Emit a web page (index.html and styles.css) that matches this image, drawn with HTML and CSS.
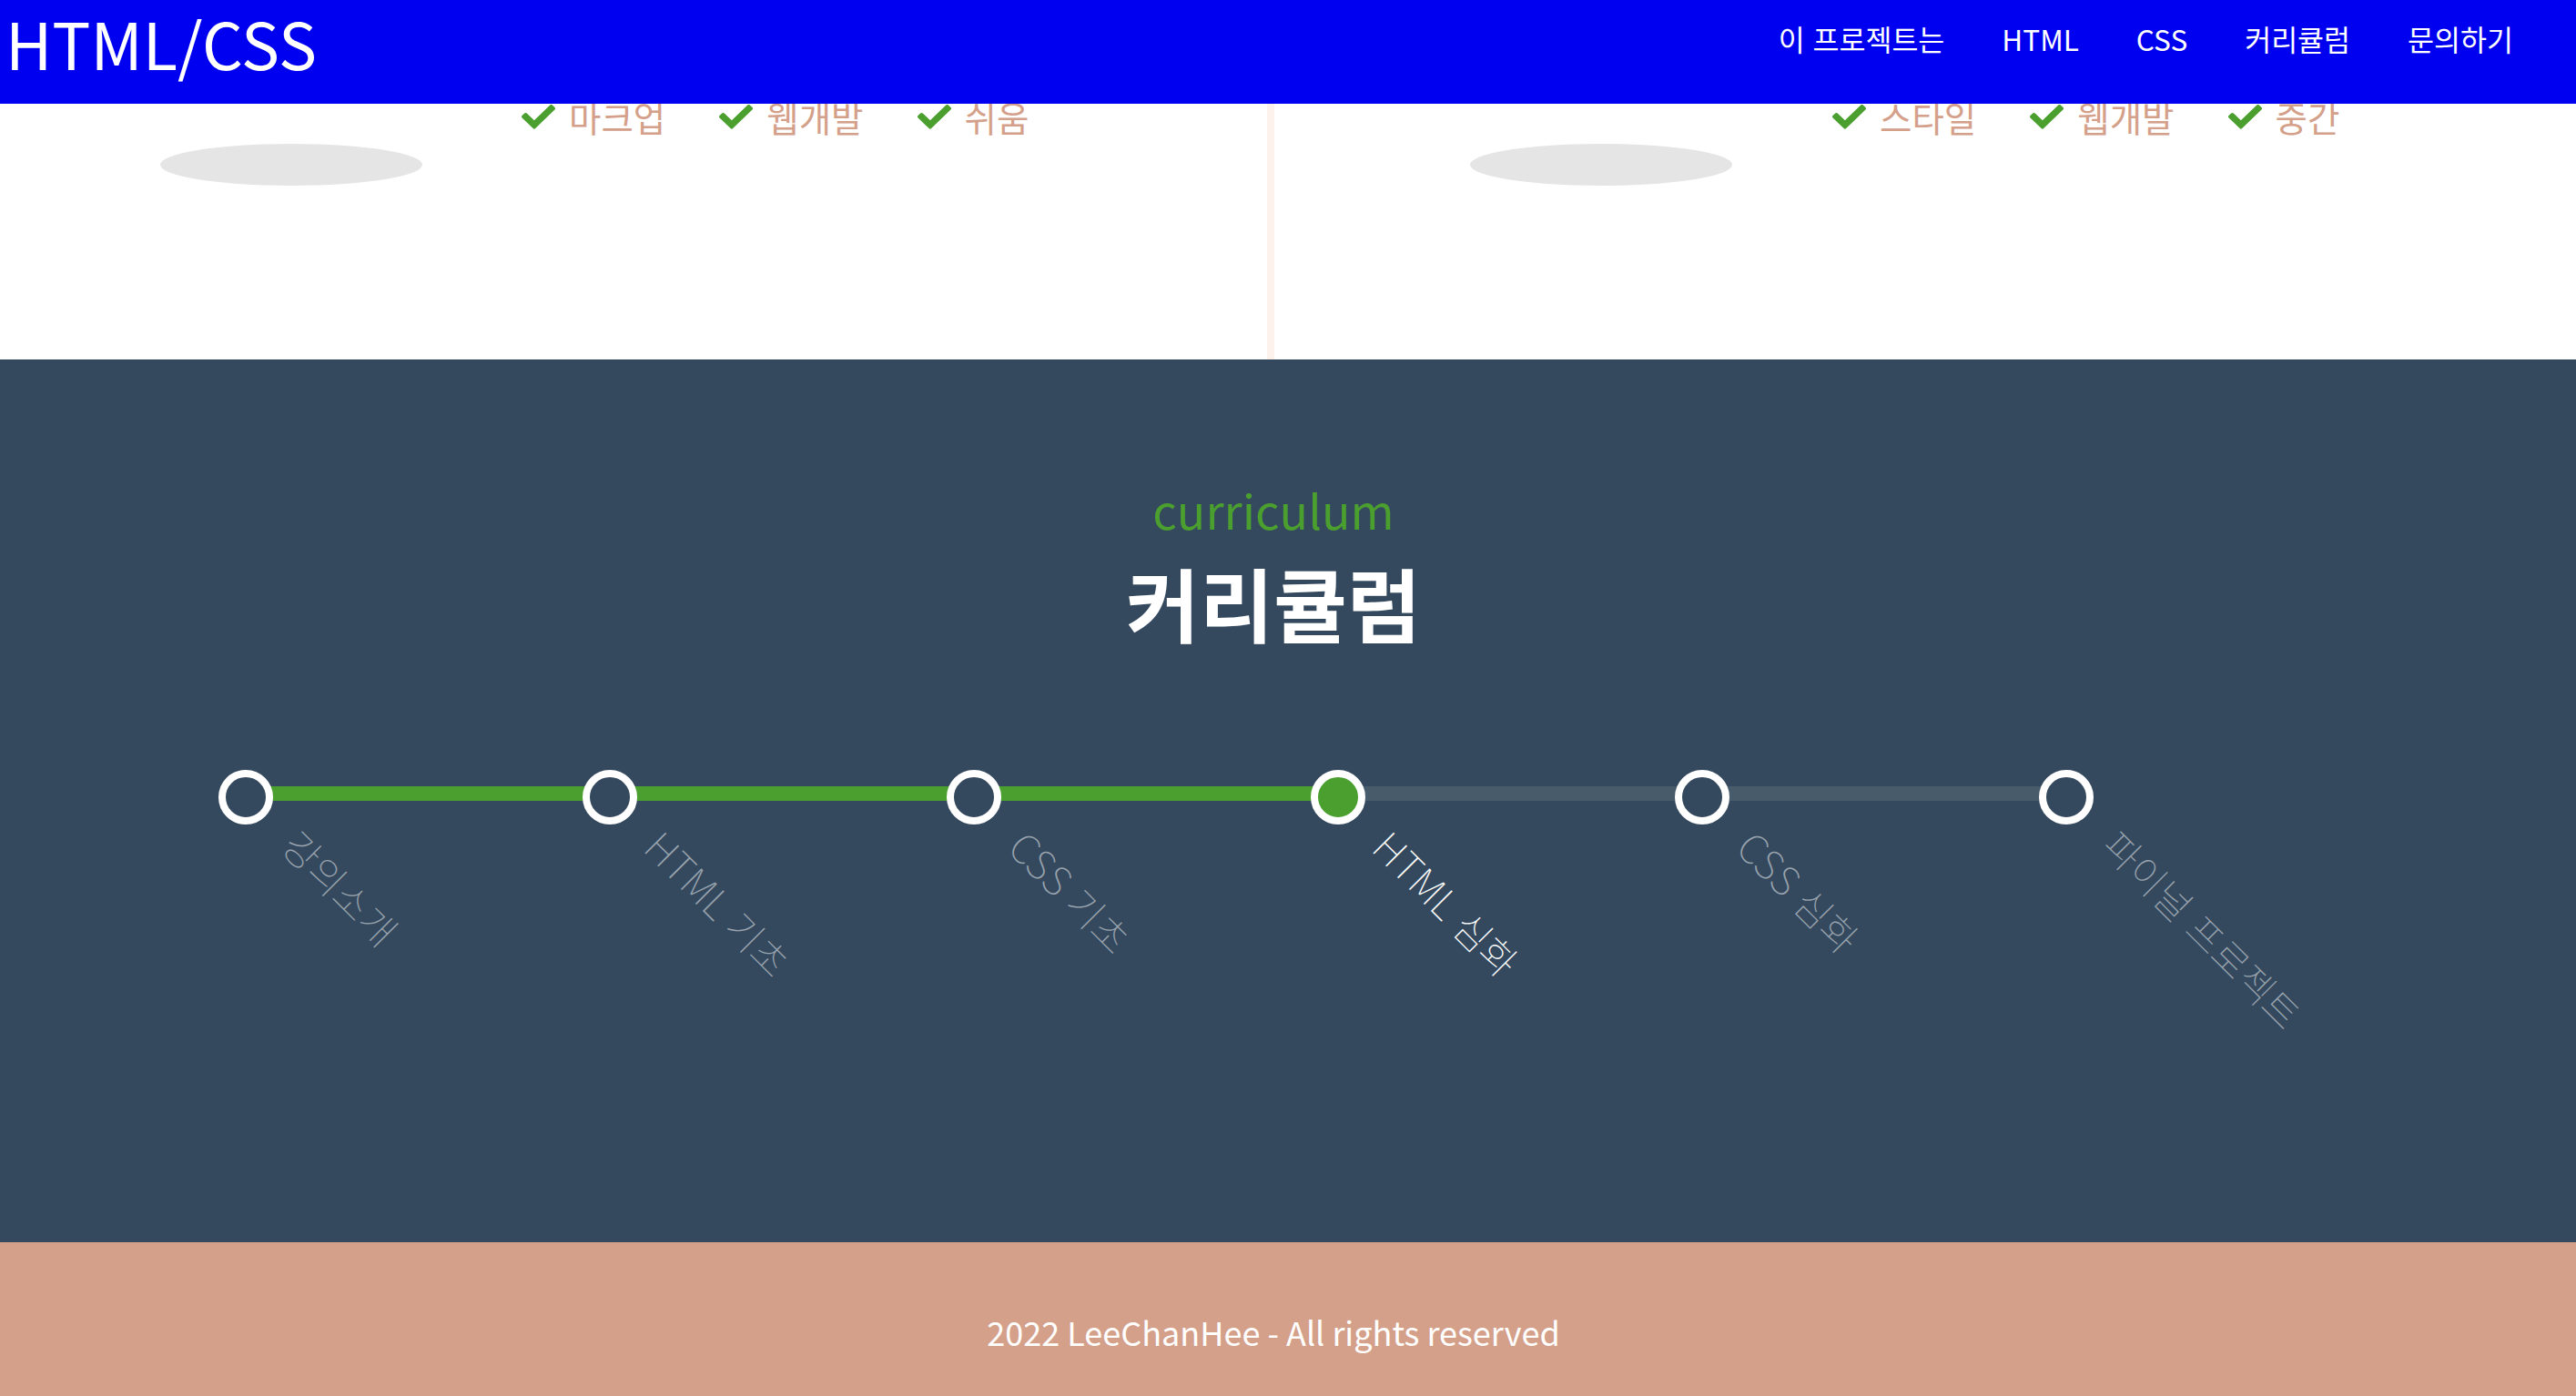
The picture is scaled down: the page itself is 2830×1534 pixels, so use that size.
FILE: index.html
```html
<!DOCTYPE html>
<html lang="ko">
<head>
<meta charset="utf-8">
<title>HTML/CSS</title>
<link rel="stylesheet" href="styles.css">
</head>
<body>
<header class="site-header">
  <h1 class="logo" lang="en">HTML/CSS</h1>
  <nav class="gnb">
    <ul class="gnb-list">
      <li class="gnb-item">이 프로젝트는</li>
      <li class="gnb-item" lang="en">HTML</li>
      <li class="gnb-item" lang="en">CSS</li>
      <li class="gnb-item">커리큘럼</li>
      <li class="gnb-item">문의하기</li>
    </ul>
  </nav>
</header>

<main>
  <section class="projects">
    <article class="project project-left">
      <div class="project-media"><div class="media-shadow"></div></div>
      <div class="project-info">
        <ul class="tags">
          <li class="tag"><svg class="check" viewBox="0 66 512 386" preserveAspectRatio="none"><path d="M173.9 439.4l-166.4-166.4c-10-10-10-26.2 0-36.2l36.2-36.2c10-10 26.2-10 36.2 0L192 312.7 432.1 72.6c10-10 26.2-10 36.2 0l36.2 36.2c10 10 10 26.2 0 36.2l-294.4 294.4c-10 10-26.2 10-36.2 0z"/></svg>마크업</li>
          <li class="tag"><svg class="check" viewBox="0 66 512 386" preserveAspectRatio="none"><path d="M173.9 439.4l-166.4-166.4c-10-10-10-26.2 0-36.2l36.2-36.2c10-10 26.2-10 36.2 0L192 312.7 432.1 72.6c10-10 26.2-10 36.2 0l36.2 36.2c10 10 10 26.2 0 36.2l-294.4 294.4c-10 10-26.2 10-36.2 0z"/></svg>웹개발</li>
          <li class="tag"><svg class="check" viewBox="0 66 512 386" preserveAspectRatio="none"><path d="M173.9 439.4l-166.4-166.4c-10-10-10-26.2 0-36.2l36.2-36.2c10-10 26.2-10 36.2 0L192 312.7 432.1 72.6c10-10 26.2-10 36.2 0l36.2 36.2c10 10 10 26.2 0 36.2l-294.4 294.4c-10 10-26.2 10-36.2 0z"/></svg>쉬움</li>
        </ul>
      </div>
    </article>
    <div class="project-divider"></div>
    <article class="project project-right">
      <div class="project-media"><div class="media-shadow"></div></div>
      <div class="project-info">
        <ul class="tags">
          <li class="tag"><svg class="check" viewBox="0 66 512 386" preserveAspectRatio="none"><path d="M173.9 439.4l-166.4-166.4c-10-10-10-26.2 0-36.2l36.2-36.2c10-10 26.2-10 36.2 0L192 312.7 432.1 72.6c10-10 26.2-10 36.2 0l36.2 36.2c10 10 10 26.2 0 36.2l-294.4 294.4c-10 10-26.2 10-36.2 0z"/></svg>스타일</li>
          <li class="tag"><svg class="check" viewBox="0 66 512 386" preserveAspectRatio="none"><path d="M173.9 439.4l-166.4-166.4c-10-10-10-26.2 0-36.2l36.2-36.2c10-10 26.2-10 36.2 0L192 312.7 432.1 72.6c10-10 26.2-10 36.2 0l36.2 36.2c10 10 10 26.2 0 36.2l-294.4 294.4c-10 10-26.2 10-36.2 0z"/></svg>웹개발</li>
          <li class="tag"><svg class="check" viewBox="0 66 512 386" preserveAspectRatio="none"><path d="M173.9 439.4l-166.4-166.4c-10-10-10-26.2 0-36.2l36.2-36.2c10-10 26.2-10 36.2 0L192 312.7 432.1 72.6c10-10 26.2-10 36.2 0l36.2 36.2c10 10 10 26.2 0 36.2l-294.4 294.4c-10 10-26.2 10-36.2 0z"/></svg>중간</li>
        </ul>
      </div>
    </article>
  </section>

  <section class="curriculum">
    <p class="curriculum-eyebrow" lang="en">curriculum</p>
    <h2 class="curriculum-title">커리큘럼</h2>
    <div class="timeline">
      <div class="timeline-track"><div class="timeline-fill"></div></div>
      <ol class="timeline-steps">
        <li class="step"><span class="step-dot"></span><span class="step-label">강의소개</span></li>
        <li class="step"><span class="step-dot"></span><span class="step-label"><span lang="en">HTML</span> 기초</span></li>
        <li class="step"><span class="step-dot"></span><span class="step-label"><span lang="en">CSS</span> 기초</span></li>
        <li class="step step-active"><span class="step-dot"></span><span class="step-label"><span lang="en">HTML</span> 심화</span></li>
        <li class="step"><span class="step-dot"></span><span class="step-label"><span lang="en">CSS</span> 심화</span></li>
        <li class="step"><span class="step-dot"></span><span class="step-label">파이널 프로젝트</span></li>
      </ol>
    </div>
  </section>
</main>

<footer class="site-footer">
  <p class="copyright" lang="en">2022 LeeChanHee - All rights reserved</p>
</footer>
</body>
</html>
```

FILE: styles.css
```css
* { box-sizing: border-box; }

body {
  margin: 0;
  font-family: "Noto Sans CJK KR", "Noto Sans", sans-serif;
  background: #fff;
}

/* header */
.site-header {
  position: sticky;
  top: 0;
  z-index: 10;
  display: flex;
  justify-content: space-between;
  align-items: flex-start;
  height: 114px;
  background: #0000f0;
  color: #fff;
}

.logo {
  margin: 0;
  padding: 11px 0 0 6px;
  font-size: 70.5px;
  font-weight: 400;
  line-height: 1;
}

.gnb-list {
  display: flex;
  align-items: baseline;
  gap: 63px;
  margin: 0;
  padding: 27px 69px 0 0;
  list-style: none;
}

.gnb-item {
  font-size: 31.5px;
  line-height: 1;
}

/* projects */
.projects {
  display: grid;
  grid-template-columns: 1392px 8px 1fr;
  height: 281px;
}

.project-divider {
  background: #fdf3ec;
}

.project {
  display: flex;
  align-items: flex-start;
}

.project-left { padding-left: 176px; }
.project-right { padding-left: 215px; }

.project-media {
  width: 288px;
  margin-top: 44px;
}

.media-shadow {
  width: 288px;
  height: 46px;
  border-radius: 50%;
  background: #e5e5e5;
}

.project-info {
  margin-left: 109px;
  margin-top: -5px;
}

.project-right .project-info { margin-left: 110px; }

.tags {
  display: flex;
  gap: 59px;
  margin: 0;
  padding: 0;
  list-style: none;
}

.tag {
  display: flex;
  align-items: center;
  font-size: 38.5px;
  line-height: 1;
  color: #d4a08a;
}

.check {
  width: 37px;
  height: 27px;
  margin-right: 15px;
  fill: #4a9f2f;
}

/* curriculum */
.curriculum {
  height: 970px;
  padding-top: 139px;
  background: #34495e;
  color: #fff;
  text-align: center;
}

.curriculum-eyebrow {
  margin: 0;
  padding-right: 32px;
  font-size: 52px;
  line-height: 1;
  color: #4a9f2f;
}

.curriculum-title {
  margin: 31px 0 0;
  padding-right: 32px;
  font-size: 88px;
  font-weight: 700;
  line-height: 1;
}

.timeline {
  position: relative;
  margin-top: 141px;
  text-align: left;
}

.timeline-track {
  position: absolute;
  left: 270px;
  top: 18px;
  width: 2000px;
  height: 16px;
  background: #485b6b;
}

.timeline-fill {
  width: 1200px;
  height: 100%;
  background: #4a9f2f;
}

.timeline-steps {
  position: relative;
  display: flex;
  margin: 0;
  padding: 0 0 0 240px;
  list-style: none;
}

.step {
  position: relative;
  flex: none;
  width: 400px;
  height: 60px;
}

.step-dot {
  display: block;
  width: 60px;
  height: 60px;
  border: 8px solid #fff;
  border-radius: 50%;
  background: #34495e;
}

.step-active .step-dot {
  background: #4a9f2f;
}

.step-label {
  position: absolute;
  left: 94px;
  top: 59px;
  transform: rotate(45deg);
  transform-origin: 0 0;
  white-space: nowrap;
  font-size: 42.5px;
  font-weight: 100;
  line-height: 1;
  color: rgba(255, 255, 255, 0.5);
}

.step-label span:lang(en) {
  font-size: 44px;
}

.step-active .step-label {
  color: #fff;
}

/* footer */
.site-footer {
  height: 169px;
  padding: 80px 32px 0 0;
  background: #d4a08a;
  color: #fff;
  text-align: center;
}

.copyright {
  margin: 0;
  font-size: 36px;
  line-height: 1;
}
```
